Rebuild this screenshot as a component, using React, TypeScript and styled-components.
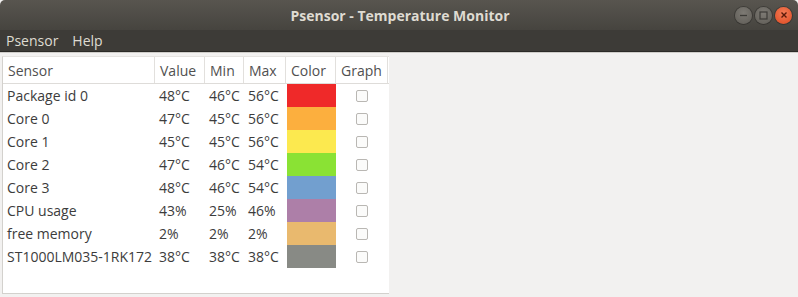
import React from 'react';
import styled, { createGlobalStyle } from 'styled-components';

type Sensor = {
    name: string
    value: string
    min: string
    max: string
    color: string
}

const sensors: Sensor[] = [
    { name: 'Package id 0', value: '48°C', min: '46°C', max: '56°C', color: '#ef2929' },
    { name: 'Core 0', value: '47°C', min: '45°C', max: '56°C', color: '#fcaf3e' },
    { name: 'Core 1', value: '45°C', min: '45°C', max: '56°C', color: '#fce94f' },
    { name: 'Core 2', value: '47°C', min: '46°C', max: '54°C', color: '#8ae234' },
    { name: 'Core 3', value: '48°C', min: '46°C', max: '54°C', color: '#729fcf' },
    { name: 'CPU usage', value: '43%', min: '25%', max: '46%', color: '#ad7fa8' },
    { name: 'free memory', value: '2%', min: '2%', max: '2%', color: '#e9b96e' },
    { name: 'ST1000LM035-1RK172', value: '38°C', min: '38°C', max: '38°C', color: '#888a85' },
]

const App: React.FC = () => {
    return (
        <Window>
            <GlobalStyle />
            <TitleBar>
                <span />
                <Title>Psensor - Temperature Monitor</Title>
                <Controls>
                    <WinButton>
                        <svg width="9" height="9" viewBox="0 0 9 9">
                            <line x1="1" y1="4.5" x2="8" y2="4.5" stroke="#3c3b37" strokeWidth="1.3" />
                        </svg>
                    </WinButton>
                    <WinButton>
                        <svg width="9" height="9" viewBox="0 0 9 9">
                            <rect x="1" y="1" width="7" height="7" fill="none" stroke="#3c3b37" strokeWidth="1.2" />
                        </svg>
                    </WinButton>
                    <WinButton close>
                        <svg width="8" height="8" viewBox="0 0 8 8">
                            <path d="M1.5 1.5 L6.5 6.5 M6.5 1.5 L1.5 6.5" stroke="#5a1a0a" strokeWidth="1.4" />
                        </svg>
                    </WinButton>
                </Controls>
            </TitleBar>
            <MenuBar>
                <MenuItem>Psensor</MenuItem>
                <MenuItem>Help</MenuItem>
            </MenuBar>
            <Content>
                <Tree>
                    <HeaderRow>
                        <HeadCell>Sensor</HeadCell>
                        <HeadCell>Value</HeadCell>
                        <HeadCell>Min</HeadCell>
                        <HeadCell>Max</HeadCell>
                        <HeadCell>Color</HeadCell>
                        <HeadCell>Graph</HeadCell>
                    </HeaderRow>
                    {sensors.map((s) => (
                        <Row key={s.name}>
                            <Cell>{s.name}</Cell>
                            <Cell>{s.value}</Cell>
                            <Cell>{s.min}</Cell>
                            <Cell>{s.max}</Cell>
                            <SwatchCell>
                                <Swatch style={{ background: s.color }} />
                            </SwatchCell>
                            <CheckCell>
                                <CheckBox />
                            </CheckCell>
                        </Row>
                    ))}
                </Tree>
            </Content>
        </Window>
    )
}
export default App

const GlobalStyle = createGlobalStyle`
    html, body {
        margin: 0;
        padding: 0;
        background: #f2f1f0;
    }
    * {
        box-sizing: border-box;
    }
`
const COLUMNS = '152px 50px 39px 42px 50px 52px'

const Window = styled.div`
    width: 798px;
    height: 297px;
    display: flex;
    flex-direction: column;
    font-family: 'Open Sans', 'DejaVu Sans', sans-serif;
    font-size: 14px;
    background: #f2f1f0;
    overflow: hidden;
`
const TitleBar = styled.div`
    height: 30px;
    display: grid;
    grid-template-columns: 1fr auto 1fr;
    align-items: center;
    background: linear-gradient(#58554f, #46443f);
    border-radius: 5px 5px 0 0;
`
const Title = styled.div`
    color: #dfdbd2;
    font-weight: 700;
    font-size: 14px;
    padding-left: 2px;
`
const Controls = styled.div`
    display: flex;
    justify-content: flex-end;
    gap: 3px;
    padding-right: 6px;
`
const WinButton = styled.div<{ close?: boolean }>`
    width: 17px;
    height: 17px;
    border-radius: 50%;
    display: flex;
    align-items: center;
    justify-content: center;
    background: ${(p) => (p.close
        ? 'radial-gradient(circle at 50% 35%, #f37b55, #df4a22)'
        : 'radial-gradient(circle at 50% 35%, #7d7a74, #5f5c56)')};
    box-shadow: 0 0 0 1px rgba(0, 0, 0, 0.25);
`
const MenuBar = styled.div`
    height: 22px;
    display: flex;
    align-items: center;
    gap: 14px;
    padding-left: 6px;
    background: #3d3b37;
    border-bottom: 1px solid #2b2a27;
`
const MenuItem = styled.span`
    color: #dfdbd2;
    font-size: 14px;
`
const Content = styled.div`
    flex: 1;
    padding: 3px 0 0 2px;
    border-top: 1px solid #cfcdc9;
    display: flex;
    align-items: flex-start;
`
const Tree = styled.div`
    width: 387px;
    height: 238px;
    background: #ffffff;
    border-left: 1px solid #d3d1cd;
    border-bottom: 1px solid #d3d1cd;
    border-top: 1px solid #e6e4e1;
`
const HeaderRow = styled.div`
    display: grid;
    grid-template-columns: ${COLUMNS};
    height: 27px;
    border-bottom: 1px solid #dedcd9;
`
const HeadCell = styled.div`
    display: flex;
    align-items: center;
    padding-left: 5px;
    color: #505050;
    border-right: 1px solid #e2e0dd;
`
const Row = styled.div`
    display: grid;
    grid-template-columns: ${COLUMNS};
    height: 23px;
`
const Cell = styled.div`
    display: flex;
    align-items: center;
    padding-left: 4px;
    color: #3c3c3c;
    white-space: nowrap;
`
const SwatchCell = styled.div`
    padding-left: 1px;
    display: flex;
`
const Swatch = styled.div`
    width: 49px;
    height: 100%;
`
const CheckCell = styled.div`
    display: flex;
    align-items: center;
    justify-content: center;
`
const CheckBox = styled.div`
    width: 12px;
    height: 12px;
    border: 1px solid #b9b7b3;
    border-radius: 2px;
    background: #fbfbfa;
`
